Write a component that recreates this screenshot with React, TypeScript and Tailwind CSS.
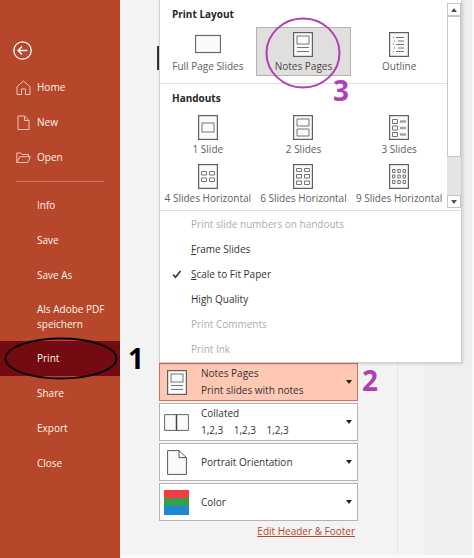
import type { ReactNode } from "react";

type Layout = "full" | "notes" | "outline" | "one" | "two" | "three" | "four" | "six" | "nine";

const inner: Record<Layout, ReactNode> = {
  full: null,
  notes: (
    <>
      <rect x="4" y="4" width="12" height="8" />
      <path d="M4 15.500h12M4 19.500h12" />
    </>
  ),
  outline: (
    <>
      <path d="M7 5.500h8M9 9h6M7 12.500h8M9 16h6M7 19.500h8" />
      <path d="M4 5.500h1M5 9h1M4 12.500h1M5 16h1M4 19.500h1" />
    </>
  ),
  one: <rect x="4" y="8" width="12" height="9" />,
  two: <path d="M4 4h12v7H4zM4 14h12v7H4z" />,
  three: (
    <>
      <path d="M3.500 4.500h5v4h-5zM3.500 11h5v4h-5zM3.500 17.500h5v4h-5z" />
      <path d="M11 6.500h6M11 13h6M11 19.500h6" strokeWidth="2.500" opacity="0.65" />
    </>
  ),
  four: <path d="M3.500 7.500h5v3.500h-5zM11.500 7.500h5v3.500h-5zM3.500 14h5v3.500h-5zM11.500 14h5v3.500h-5z" />,
  six: (
    <path d="M3.500 4.500h5v3h-5zM11.500 4.500h5v3h-5zM3.500 10.500h5v3.500h-5zM11.500 10.500h5v3.500h-5zM3.500 17h5v3.500h-5zM11.500 17h5v3.500h-5z" />
  ),
  nine: (
    <path d="M3.500 5.500h2.500v3h-2.500zM8.800 5.500h2.500v3h-2.500zM14 5.500h2.500v3h-2.500zM3.500 11h2.500v3h-2.500zM8.800 11h2.500v3h-2.500zM14 11h2.500v3h-2.500zM3.500 16.500h2.500v3h-2.500zM8.800 16.500h2.500v3h-2.500zM14 16.500h2.500v3h-2.500z" />
  ),
};

function LayoutIcon({ kind }: { kind: Layout }) {
  if (kind === "full") {
    return (
      <svg width="26" height="25" viewBox="0 0 26 25" fill="#fafafa" stroke="#666" aria-hidden="true">
        <rect x="0.5" y="3.5" width="25" height="17" strokeWidth="1.2" />
      </svg>
    );
  }
  return (
    <svg width="20" height="25" viewBox="0 0 20 25" fill="#fafafa" stroke="#777" aria-hidden="true">
      <rect x="0.6" y="0.6" width="18.8" height="23.8" stroke="#5f5f5f" strokeWidth="1.2" />
      {inner[kind]}
    </svg>
  );
}

function Tile({ kind, label, selected }: { kind: Layout; label: string; selected?: boolean }) {
  return (
    <button
      type="button"
      aria-pressed={selected ?? false}
      className={
        selected
          ? "flex h-[49px] flex-col items-center border border-[#b5b3b1] bg-[#e1dfdd] pt-1 text-[#484848]"
          : "flex h-[49px] flex-col items-center border border-transparent pt-1 text-[#606060]"
      }
    >
      <LayoutIcon kind={kind} />
      <span className="whitespace-nowrap text-[10px] leading-[18px]">{label}</span>
    </button>
  );
}

const topLinks = [
  {
    label: "Home",
    icon: <path d="M1 6.700 7.500 1l6.500 5.700V14.500H9.500V9H5.500v5.500H1z" />,
  },
  {
    label: "New",
    icon: <path d="M2 1h6.500L13 5.500v9H2zM8.500 1v4.500H13" />,
  },
  {
    label: "Open",
    icon: <path d="M.8 12.500V3h4l1.500 1.500h6.200v2.200M.8 12.500l3-5.800h10.500l-2.500 5.800z" />,
  },
];

const links = ["Info", "Save", "Save As", "Als Adobe PDF speichern", "Print", "Share", "Export", "Close"];

function Sidebar() {
  return (
    <nav className="relative w-30 shrink-0 bg-[#b7472a] text-[10px] leading-[15px] font-medium text-[#fff3ee]">
      <div className="flex h-[70px] items-end pb-[10px] pl-[13px]">
        <button type="button" aria-label="Back">
          <svg width="19" height="19" viewBox="0 0 19 19" fill="none" stroke="#fff" strokeWidth="1.3">
            <circle cx="9.500" cy="9.500" r="8.700" />
            <path d="M14.500 9.500H5M9 5.500l-4 4 4 4" />
          </svg>
        </button>
      </div>
      {topLinks.map((link) => (
        <a key={link.label} href="#" className="flex h-[35px] items-center gap-[6px] pl-[16px]">
          <svg width="15" height="15" viewBox="0 0 15 15" fill="none" stroke="#f0c4b5" aria-hidden="true">
            {link.icon}
          </svg>
          {link.label}
        </a>
      ))}
      <div className="mx-4 mt-[6px] mb-[6px] h-px bg-[#d27a61]" />
      {links.map((label) => (
        <a
          key={label}
          href="#"
          className={
            label === "Print"
              ? "flex h-[35px] items-center bg-[#750b12] pl-[37px]"
              : "flex min-h-[35px] items-center py-[9px] pr-2 pl-[37px]"
          }
        >
          {label}
        </a>
      ))}
      <svg className="absolute top-[337px] left-1" width="114" height="43" fill="none" stroke="#0b0406" strokeWidth="2" aria-hidden="true">
        <ellipse cx="57" cy="21.500" rx="55.500" ry="20" />
      </svg>
      <span className="absolute top-[338px] left-[128px] text-[28px] leading-[40px] font-bold text-black">1</span>
    </nav>
  );
}

function Scrollbar() {
  return (
    <div className="flex w-[14px] flex-col bg-[#e6e4e2]" aria-hidden="true">
      <div className="h-[3px] bg-white" />
      <div className="grid h-[13px] place-items-center border border-[#c6c6c6] bg-white">
        <svg width="6" height="4" fill="#555"><path d="M0 4 3 0l3 4z" /></svg>
      </div>
      <div className="h-[141px] border border-[#c6c6c6] bg-white" />
      <div className="mt-auto grid h-[13px] place-items-center border border-[#c6c6c6] bg-white">
        <svg width="6" height="4" fill="#555"><path d="M0 0h6L3 4z" /></svg>
      </div>
      <div className="h-[2px] bg-white" />
    </div>
  );
}

const options = [
  { label: "Print slide numbers on handouts", disabled: true },
  { label: "Frame Slides", accessKey: true },
  { label: "Scale to Fit Paper", accessKey: true, checked: true },
  { label: "High Quality" },
  { label: "Print Comments", disabled: true },
  { label: "Print Ink", disabled: true },
];

function LayoutMenu() {
  return (
    <div className="relative z-10 w-[303px] border-x border-b border-[#cfcfcf] bg-white shadow-[1px_1px_3px_rgba(0,0,0,0.15)]">
      <div className="flex border-b border-[#dcdcdc]">
        <div className="flex-1">
          <section className="border-b border-[#e1e1e1] pb-[7px]">
            <h2 className="pt-[5px] pb-1 pl-3 text-[10px] leading-[18px] font-bold text-[#262626]">Print Layout</h2>
            <div className="grid grid-cols-3">
              <Tile kind="full" label="Full Page Slides" />
              <Tile kind="notes" label="Notes Pages" selected />
              <Tile kind="outline" label="Outline" />
            </div>
          </section>
          <section className="pb-[2px]">
            <h2 className="pt-[5px] pb-[3px] pl-3 text-[10px] leading-[18px] font-bold text-[#262626]">Handouts</h2>
            <div className="grid grid-cols-3">
              <Tile kind="one" label="1 Slide" />
              <Tile kind="two" label="2 Slides" />
              <Tile kind="three" label="3 Slides" />
              <Tile kind="four" label="4 Slides Horizontal" />
              <Tile kind="six" label="6 Slides Horizontal" />
              <Tile kind="nine" label="9 Slides Horizontal" />
            </div>
          </section>
        </div>
        <Scrollbar />
      </div>
      <div className="pt-px">
        {options.map((option) => (
          <button
            key={option.label}
            type="button"
            disabled={option.disabled}
            className="flex h-[25px] w-full items-center pl-3 text-[10px] text-[#333] disabled:text-[#b0acaa]"
          >
            <span className="w-[19px]">
              {option.checked && (
                <svg width="10" height="9" fill="none" stroke="#333" strokeWidth="1.600" aria-hidden="true">
                  <path d="M1 4.500 3.500 7.200 8.500 1" />
                </svg>
              )}
            </span>
            {option.accessKey ? (
              <span>
                <u>{option.label[0]}</u>
                {option.label.slice(1)}
              </span>
            ) : (
              option.label
            )}
          </button>
        ))}
      </div>
      <svg className="absolute top-[17px] left-[105px]" width="76" height="72" fill="none" stroke="#b13fb3" strokeWidth="2" aria-hidden="true">
        <ellipse cx="38" cy="36" rx="36.500" ry="34.500" />
      </svg>
      <span className="absolute top-[70px] left-[173px] text-[28px] leading-[40px] font-bold text-[#b13fb3]">3</span>
    </div>
  );
}

function SettingButton({ icon, title, detail, active }: { icon: ReactNode; title: string; detail?: string; active?: boolean }) {
  return (
    <button
      type="button"
      className={
        active
          ? "flex h-[38px] w-full items-center border border-[#cf7258] bg-[#ffc8b4] pr-[5px] pl-1 text-left text-[10px] leading-[17px] text-[#333]"
          : "flex h-[38px] w-full items-center border border-[#b3b3b3] bg-white pr-[5px] pl-1 text-left text-[10px] leading-[17px] text-[#333]"
      }
    >
      <span className="grid w-[25px] place-items-center">{icon}</span>
      <span className="flex-1 pl-3 whitespace-pre">
        <span className="block">{title}</span>
        {detail && <span className="block">{detail}</span>}
      </span>
      <svg width="6" height="4" fill="#222" aria-hidden="true"><path d="M0 0h6L3 4z" /></svg>
    </button>
  );
}

export default function App() {
  return (
    <div className="flex min-h-screen bg-[#f3f3f3] font-['Open_Sans','Noto_Sans',sans-serif]">
      <Sidebar />
      <main className="flex flex-1 border-r-2 border-b-3 border-[#fafafa]">
        <div className="relative w-[278px] shrink-0 border-r border-[#e6e6e6] pl-[39px]">
          <div className="absolute top-[46px] left-[37px] h-6 w-[2px] bg-[#333]" />
          <LayoutMenu />
          <div className="relative flex w-[199px] flex-col gap-[2px]">
            <SettingButton active icon={<LayoutIcon kind="notes" />} title="Notes Pages" detail="Print slides with notes" />
            <SettingButton
              icon={
                <svg width="25" height="17" viewBox="0 0 25 17" fill="#fafafa" stroke="#666" aria-hidden="true">
                  <path d="M.6.6h23.800v15.800H.6z" />
                  <path d="M12.500.6v15.800" stroke="#444" strokeWidth="1.500" />
                </svg>
              }
              title="Collated"
              detail="1,2,3    1,2,3    1,2,3"
            />
            <SettingButton
              icon={
                <svg width="20" height="25" viewBox="0 0 20 25" fill="#fafafa" stroke="#555" aria-hidden="true">
                  <path d="M.6.6H12l7.400 7v16.800H.6zM12 .6v7h7.400" />
                </svg>
              }
              title="Portrait Orientation"
            />
            <SettingButton
              icon={
                <svg width="25" height="25" aria-hidden="true">
                  <path d="M0 0h25v9H0z" fill="#ee3e42" />
                  <path d="M0 8h25v9H0z" fill="#35a049" />
                  <path d="M0 16h25v9H0z" fill="#1e88d2" />
                </svg>
              }
              title="Color"
            />
            <span className="absolute top-[-3px] left-[203px] text-[28px] leading-[40px] font-bold text-[#b13fb3]">2</span>
          </div>
          <div className="w-[199px] pr-[3px] text-right text-[10px] leading-[20px]">
            <a href="#" className="text-[#b7472a] underline">Edit Header &amp; Footer</a>
          </div>
        </div>
        <div className="flex-1 bg-[linear-gradient(90deg,#f3f3f3_26px,#efefef_26px)]" />
      </main>
    </div>
  );
}
